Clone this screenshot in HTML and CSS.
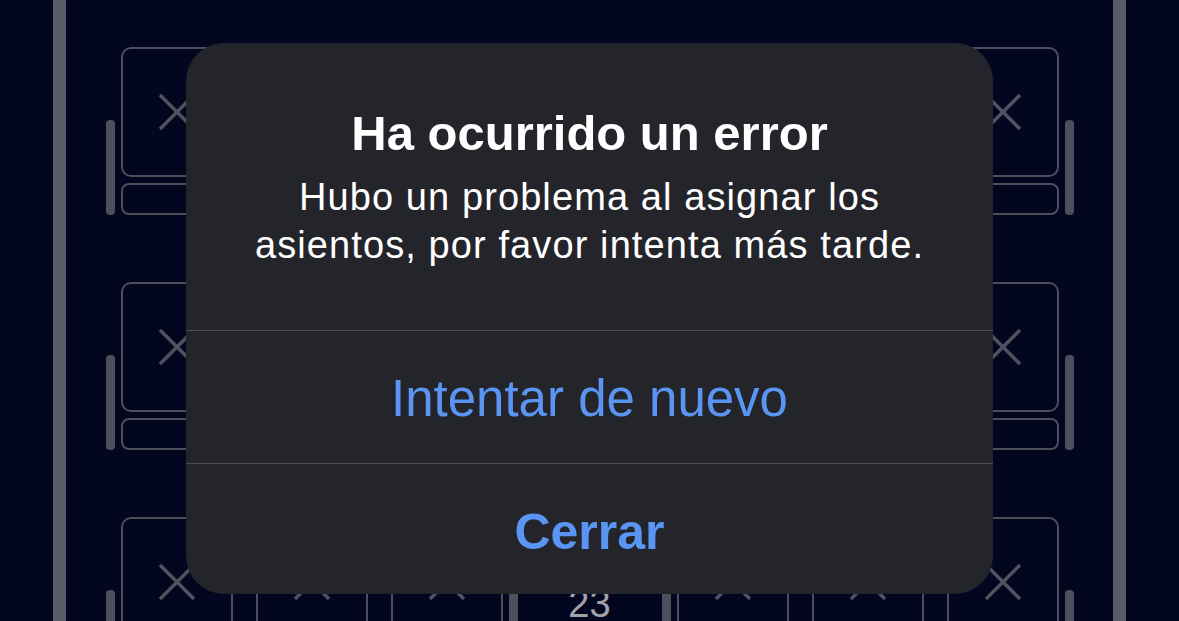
FILE: index.html
```html
<!DOCTYPE html>
<html lang="es">
<head>
  <meta charset="UTF-8">
  <meta name="viewport" content="width=device-width, initial-scale=1.0">
  <title>Selección de asientos</title>
  <link rel="stylesheet" href="styles.css">
</head>
<body>
  <div class="cabin">
    <div class="wall"></div>
    <div class="deck" id="deck"></div>
    <div class="wall"></div>
  </div>

  <div class="alert">
    <div class="alert-body">
      <h2 class="alert-title">Ha ocurrido un error</h2>
      <p class="alert-text">Hubo un problema al asignar los<br>asientos, por favor intenta más tarde.</p>
    </div>
    <button class="alert-btn">Intentar de nuevo</button>
    <button class="alert-btn alert-btn-bold">Cerrar</button>
  </div>

  <script>
    const deck = document.getElementById('deck');
    // only the last row number shows below the alert
    const rows = ['', '', '23'];

    // seat with a cross: all seats are taken
    function seat() {
      return `
        <div class="seat">
          <div class="seat-back">
            <svg class="seat-x" width="40" height="40" viewBox="0 0 40 40">
              <path d="M3 3 L37 37 M37 3 L3 37" />
            </svg>
          </div>
          <div class="seat-cushion"></div>
        </div>`;
    }

    function group() {
      return `
        <div class="group">
          <div class="armrest"></div>
          <div class="seats">${seat()}${seat()}${seat()}</div>
          <div class="armrest"></div>
        </div>`;
    }

    rows.forEach((num) => {
      const row = document.createElement('div');
      row.className = 'row';
      row.innerHTML = group() + `<div class="aisle">${num}</div>` + group();
      deck.appendChild(row);
    });
  </script>
</body>
</html>
```

FILE: styles.css
```css
html, body {
  margin: 0;
  padding: 0;
  height: 100%;
  overflow: hidden;
}
body {
  background-color: #02061f;
  font-family: "Liberation Sans", Arial, sans-serif;
}
.cabin {
  display: flex;
  height: 100%;
  padding: 0 53px;
}
.wall {
  width: 13px;
  background-color: #5a5b67;
}
.deck {
  flex: 1;
  display: flex;
  flex-direction: column;
  gap: 67px;
  padding-top: 47px;
}
.row {
  display: flex;
  justify-content: center;
  height: 168px;
  flex-shrink: 0;
}
.group {
  display: flex;
  align-items: flex-end;
  gap: 6px;
}
.armrest {
  width: 9px;
  height: 95px;
  border-radius: 4px;
  background-color: #4d4f5c;
}
.seats {
  display: flex;
  gap: 23px;
  height: 100%;
}
.seat {
  display: flex;
  flex-direction: column;
  gap: 6px;
  width: 112px;
}
.seat-back {
  height: 130px;
  box-sizing: border-box;
  border: 2px solid #4c4e5c;
  border-radius: 10px;
  display: flex;
  align-items: center;
  justify-content: center;
}
.seat-x path {
  stroke: #50525f;
  stroke-width: 3.5;
  fill: none;
}
.seat-cushion {
  height: 32px;
  box-sizing: border-box;
  border: 2px solid #4c4e5c;
  border-radius: 8px;
}
.aisle {
  width: 144px;
  padding-top: 68px;
  text-align: center;
  font-size: 38px;
  line-height: 1;
  color: #a2a3ab;
}

/* alert over the seat map */
.alert {
  position: absolute;
  left: 186px;
  top: 43px;
  width: 807px;
  height: 551px;
  border-radius: 38px;
  background-color: #24252b;
  display: flex;
  flex-direction: column;
  overflow: hidden;
}
.alert-body {
  padding: 61px 20px 61px;
  text-align: center;
  color: #ffffff;
}
.alert-title {
  margin: 0 0 11px;
  font-size: 49px;
  line-height: 58px;
  font-weight: 700;
}
.alert-text {
  margin: 0;
  font-size: 38px;
  line-height: 48px;
  letter-spacing: 1.1px;
}
.alert-btn {
  height: 133px;
  flex-shrink: 0;
  padding: 2px 0 0;
  border: none;
  border-top: 1px solid #4d4e55;
  background: none;
  color: #5b95f4;
  font-family: "Liberation Sans", Arial, sans-serif;
  font-size: 51px;
  line-height: 1;
  cursor: pointer;
}
.alert-btn-bold {
  flex: 1;
  padding-top: 6px;
  font-size: 50px;
  font-weight: 700;
}
```
